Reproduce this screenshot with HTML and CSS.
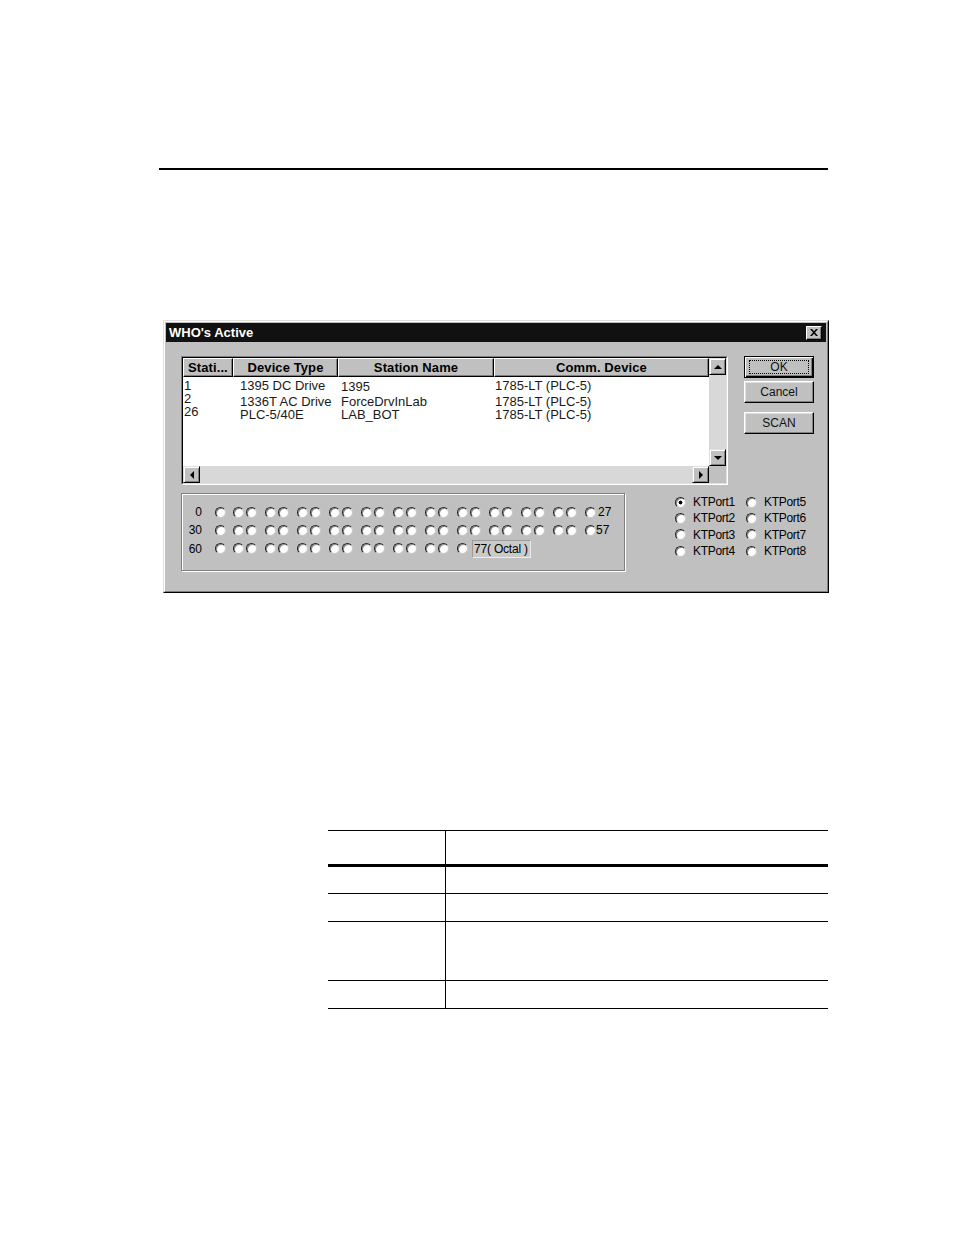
FILE: index.html
```html
<!DOCTYPE html>
<html>
<head>
<meta charset="utf-8">
<title>WHO's Active</title>
<link rel="stylesheet" href="styles.css">
</head>
<body>
<div class="page">
  <div class="rule"></div>

  <div class="dialog">
    <div class="frame">
      <div class="titlebar">
        <span class="title">WHO's Active</span>
        <span class="closebtn"><svg width="8" height="7" viewBox="0 0 8 7"><path d="M0 0h2l2 2.2L6 0h2L5 3.5 8 7H6L4 4.8 2 7H0l3-3.5z" fill="#000"/></svg></span>
      </div>
      <div class="client">
        <div class="toprow">
          <div class="listbox">
            <div class="listinner">
              <div class="listmain">
                <div class="header">
                  <div class="hcell c1 left">Stati...</div>
                  <div class="hcell c2">Device Type</div>
                  <div class="hcell c3">Station Name</div>
                  <div class="hcell c4">Comm. Device</div>
                </div>
                <div class="rows">
                  <div class="col c1 p1">
                    <div class="ln">1</div>
                    <div class="ln">2</div>
                    <div class="ln">26</div>
                  </div>
                  <div class="col c2 p2">
                    <div class="ln">1395 DC Drive</div>
                    <div class="ln gap">1336T AC Drive</div>
                    <div class="ln">PLC-5/40E</div>
                  </div>
                  <div class="col c3 p3">
                    <div class="ln low">1395</div>
                    <div class="ln gap2">ForceDrvInLab</div>
                    <div class="ln">LAB_BOT</div>
                  </div>
                  <div class="col c4 p4">
                    <div class="ln">1785-LT (PLC-5)</div>
                    <div class="ln gap">1785-LT (PLC-5)</div>
                    <div class="ln">1785-LT (PLC-5)</div>
                  </div>
                </div>
              </div>
              <div class="vscroll">
                <div class="sbtn"><span class="arr up"></span></div>
                <div class="track"></div>
                <div class="sbtn"><span class="arr down"></span></div>
              </div>
              <div class="hscroll">
                <div class="sbtn"><span class="arr lft"></span></div>
                <div class="track"></div>
                <div class="sbtn"><span class="arr rgt"></span></div>
              </div>
              <div class="corner"></div>
            </div>
          </div>
          <div class="buttons">
            <div class="btn default"><span class="focus">OK</span></div>
            <div class="btn cancel">Cancel</div>
            <div class="btn scan">SCAN</div>
          </div>
        </div>

        <div class="bottomrow">
          <div class="groupbox">
            <div class="nrow">
              <span class="nlabel">0</span>
              <span class="radios">
                <i class="r"></i><i class="r"></i><i class="r"></i><i class="r"></i><i class="r"></i><i class="r"></i><i class="r"></i><i class="r"></i>
                <i class="r"></i><i class="r"></i><i class="r"></i><i class="r"></i><i class="r"></i><i class="r"></i><i class="r"></i><i class="r"></i>
                <i class="r"></i><i class="r"></i><i class="r"></i><i class="r"></i><i class="r"></i><i class="r"></i><i class="r"></i><i class="r"></i>
              </span>
              <span class="endlabel">27</span>
            </div>
            <div class="nrow">
              <span class="nlabel">30</span>
              <span class="radios">
                <i class="r"></i><i class="r"></i><i class="r"></i><i class="r"></i><i class="r"></i><i class="r"></i><i class="r"></i><i class="r"></i>
                <i class="r"></i><i class="r"></i><i class="r"></i><i class="r"></i><i class="r"></i><i class="r"></i><i class="r"></i><i class="r"></i>
                <i class="r"></i><i class="r"></i><i class="r"></i><i class="r"></i><i class="r"></i><i class="r"></i><i class="r"></i><i class="r"></i>
              </span>
              <span class="endlabel tight">57</span>
            </div>
            <div class="nrow last">
              <span class="nlabel">60</span>
              <span class="radios">
                <i class="r"></i><i class="r"></i><i class="r"></i><i class="r"></i><i class="r"></i><i class="r"></i><i class="r"></i><i class="r"></i>
                <i class="r"></i><i class="r"></i><i class="r"></i><i class="r"></i><i class="r"></i><i class="r"></i><i class="r"></i><i class="r"></i>
              </span>
              <span class="octal">77( Octal )</span>
            </div>
          </div>

          <div class="ports">
            <div class="port"><i class="r on"></i><span>KTPort1</span></div>
            <div class="port"><i class="r"></i><span>KTPort5</span></div>
            <div class="port"><i class="r"></i><span>KTPort2</span></div>
            <div class="port"><i class="r"></i><span>KTPort6</span></div>
            <div class="port"><i class="r"></i><span>KTPort3</span></div>
            <div class="port"><i class="r"></i><span>KTPort7</span></div>
            <div class="port"><i class="r"></i><span>KTPort4</span></div>
            <div class="port"><i class="r"></i><span>KTPort8</span></div>
          </div>
        </div>
      </div>
    </div>
  </div>

  <div class="tbl">
    <div class="cell k head"></div><div class="cell v head"></div>
    <div class="cell k r1"></div><div class="cell v r1"></div>
    <div class="cell k r2"></div><div class="cell v r2"></div>
    <div class="cell k r3"></div><div class="cell v r3"></div>
    <div class="cell k r4"></div><div class="cell v r4"></div>
  </div>
</div>
</body>
</html>
```

FILE: styles.css
```css
* { box-sizing: border-box; }

body {
  margin: 0;
  background: #fff;
  font-family: "Liberation Sans", Arial, sans-serif;
  color: #000;
}

.page {
  width: 954px;
  height: 1235px;
  padding-top: 168px;
}

.rule {
  margin-left: 159px;
  width: 669px;
  height: 2px;
  background: #000;
}

/* ---------- dialog ---------- */
.dialog {
  margin-top: 150px;
  margin-left: 163px;
  width: 666px;
  height: 273px;
  background: #c0c0c0;
  border: 1px solid;
  border-color: #dfdfdf #000 #000 #dfdfdf;
}

.frame {
  height: 100%;
  border: 1px solid;
  border-color: #fff #808080 #808080 #fff;
  padding: 1px;
}

.titlebar {
  height: 19px;
  background: #111;
  display: flex;
  align-items: center;
  justify-content: space-between;
  padding: 0 3px 0 3px;
}

.title {
  color: #fff;
  font-weight: bold;
  font-size: 13px;
  line-height: 19px;
}

.closebtn {
  width: 16px;
  height: 14px;
  background: #c0c0c0;
  border: 1px solid;
  border-color: #fff #000 #000 #fff;
  box-shadow: inset -1px -1px 0 #808080;
  display: flex;
  align-items: center;
  justify-content: center;
  margin-right: 1px;
}

.client {
  padding-left: 15px;
}

.toprow {
  display: flex;
  margin-top: 14px;
}

/* list view */
.listbox {
  width: 547px;
  height: 129px;
  border: 1px solid;
  border-color: #808080 #fff #fff #808080;
}

.listinner {
  height: 100%;
  border: 1px solid;
  border-color: #000 #dfdfdf #dfdfdf #000;
  background: #fff;
  display: grid;
  grid-template-columns: 526px 17px;
  grid-template-rows: 108px 17px;
}

.listmain { overflow: hidden; }

.header {
  display: flex;
  height: 19px;
}

.hcell {
  height: 19px;
  background: #c0c0c0;
  border: 1px solid;
  border-color: #fff #000 #000 #fff;
  box-shadow: inset -1px -1px 0 #808080;
  font-weight: bold;
  font-size: 13px;
  line-height: 17px;
  text-align: center;
  letter-spacing: 0.1px;
  white-space: nowrap;
}
.hcell.left { text-align: left; padding-left: 4px; }

.c1 { width: 50px; }
.c2 { width: 105px; }
.c3 { width: 156px; }
.c4 { width: 215px; }

.rows {
  display: flex;
  padding-top: 2px;
  font-size: 13px;
  color: #1a1a1a;
}

.col { flex: none; white-space: nowrap; }
.p1 { padding-left: 1px; }
.p2 { padding-left: 7px; }
.p3 { padding-left: 3px; }
.p4 { padding-left: 1px; }

.ln { line-height: 13px; height: 13px; }
.ln.gap { margin-top: 3px; }
.ln.low { margin-top: 1px; }
.ln.gap2 { margin-top: 2px; }

/* scrollbars */
.vscroll {
  display: flex;
  flex-direction: column;
  background: #d8d8d8;
}
.hscroll {
  display: flex;
  background: #d8d8d8;
}
.track { flex: 1; }
.corner { background: #c0c0c0; }

.sbtn {
  width: 17px;
  height: 17px;
  flex: none;
  background: #c0c0c0;
  border: 1px solid;
  border-color: #dfdfdf #000 #000 #dfdfdf;
  box-shadow: inset 1px 1px 0 #fff, inset -1px -1px 0 #808080;
  display: flex;
  align-items: center;
  justify-content: center;
}

.arr { width: 0; height: 0; display: block; }
.arr.up { border-left: 4px solid transparent; border-right: 4px solid transparent; border-bottom: 4px solid #000; }
.arr.down { border-left: 4px solid transparent; border-right: 4px solid transparent; border-top: 4px solid #000; }
.arr.lft { border-top: 4px solid transparent; border-bottom: 4px solid transparent; border-right: 4px solid #000; }
.arr.rgt { border-top: 4px solid transparent; border-bottom: 4px solid transparent; border-left: 4px solid #000; }

/* buttons */
.buttons {
  margin-left: 16px;
  width: 70px;
  display: flex;
  flex-direction: column;
}

.btn {
  height: 22px;
  background: #c0c0c0;
  border: 1px solid;
  border-color: #fff #000 #000 #fff;
  box-shadow: inset -1px -1px 0 #808080, inset 1px 1px 0 #dfdfdf;
  font-size: 12px;
  line-height: 20px;
  text-align: center;
  color: #111;
}

.btn.default {
  border: 1px solid #000;
  box-shadow: inset 1px 1px 0 #fff, inset -1px -1px 0 #000, inset -2px -2px 0 #808080;
  padding: 3px 4px;
}
.btn.default .focus {
  display: block;
  height: 14px;
  line-height: 12px;
  border: 1px dotted #000;
}

.btn.cancel { margin-top: 3px; }
.btn.scan { margin-top: 9px; }

/* bottom row */
.bottomrow {
  display: flex;
  margin-top: 8px;
}

.groupbox {
  width: 444px;
  height: 78px;
  border: 1px solid #808080;
  box-shadow: 1px 1px 0 #fff, inset 1px 1px 0 #fff;
  padding-top: 9px;
  font-size: 12px;
}

.nrow {
  display: flex;
  align-items: center;
  height: 18px;
}
.nrow.last { height: 19px; }

.nlabel {
  width: 20px;
  text-align: right;
  margin-right: 13px;
}

.radios { display: flex; }

.r {
  display: block;
  flex: none;
  width: 11px;
  height: 11px;
  border-radius: 50%;
  background: #fff;
  border: 1px solid;
  border-color: #222 #c8c8c8 #c8c8c8 #222;
  box-shadow: inset 1px 1px 0 #8a8a8a;
}
.radios .r:nth-child(even) { margin-left: 8.5px; }
.radios .r:nth-child(2) { margin-left: 7px; }
.radios .r:nth-child(odd) { margin-left: 1.5px; }
.radios .r:first-child { margin-left: 0; }

.r.on { background: radial-gradient(circle, #000 0 1.7px, #fff 2.2px); }

.endlabel { margin-left: 2px; }
.endlabel.tight { margin-left: 0; }

.octal {
  margin-left: 4px;
  width: 59px;
  height: 18px;
  background: #cacaca;
  border: 1px solid;
  border-color: #9a9a9a #ececec #ececec #9a9a9a;
  line-height: 16px;
  padding-left: 1px;
  letter-spacing: -0.2px;
  white-space: nowrap;
}

.ports {
  margin-left: 50px;
  margin-top: 1px;
  display: grid;
  grid-template-columns: 71px auto;
  grid-auto-rows: 16.33px;
  font-size: 12px;
  letter-spacing: -0.3px;
}

.port {
  display: flex;
  align-items: center;
}
.port span { margin-left: 7px; }

/* ---------- table ---------- */
.tbl {
  margin-top: 237px;
  margin-left: 328px;
  width: 500px;
  display: grid;
  grid-template-columns: 118px 1fr;
}

.cell { border-bottom: 1px solid #000; }
.cell.k { border-right: 1px solid #000; }
.cell.head { height: 37px; border-top: 1px solid #000; border-bottom: 3px solid #000; }
.cell.r1 { height: 27px; }
.cell.r2 { height: 28px; }
.cell.r3 { height: 59px; }
.cell.r4 { height: 28px; }
```
